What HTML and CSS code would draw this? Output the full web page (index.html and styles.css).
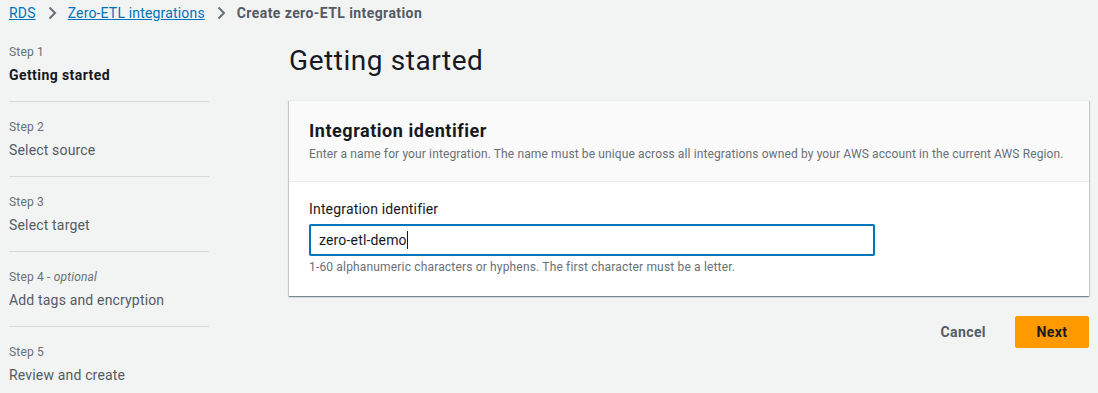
FILE: index.html
```html
<!DOCTYPE html>
<html lang="en">
<head>
  <meta charset="UTF-8">
  <meta name="viewport" content="width=device-width, initial-scale=1">
  <title>Create zero-ETL integration</title>
  <link rel="stylesheet" href="styles.css">
</head>
<body>
  <nav class="breadcrumbs">
    <a href="#">RDS</a>
    <span class="crumb-sep">
      <svg width="16" height="16" viewBox="0 0 16 16"><path d="M5.5 2.5l5.5 5.5-5.5 5.5" fill="none" stroke="currentColor" stroke-width="2"/></svg>
    </span>
    <a href="#">Zero-ETL integrations</a>
    <span class="crumb-sep">
      <svg width="16" height="16" viewBox="0 0 16 16"><path d="M5.5 2.5l5.5 5.5-5.5 5.5" fill="none" stroke="currentColor" stroke-width="2"/></svg>
    </span>
    <span class="crumb-current">Create zero-ETL integration</span>
  </nav>

  <div class="layout">
    <ul class="steps">
      <li class="step active">
        <div class="step-label">Step 1</div>
        <div class="step-title">Getting started</div>
      </li>
      <li class="step">
        <div class="step-label">Step 2</div>
        <div class="step-title">Select source</div>
      </li>
      <li class="step">
        <div class="step-label">Step 3</div>
        <div class="step-title">Select target</div>
      </li>
      <li class="step">
        <div class="step-label">Step 4 - <i>optional</i></div>
        <div class="step-title">Add tags and encryption</div>
      </li>
      <li class="step">
        <div class="step-label">Step 5</div>
        <div class="step-title">Review and create</div>
      </li>
    </ul>

    <main class="content">
      <h1>Getting started</h1>
      <section class="panel">
        <div class="panel-header">
          <h2>Integration identifier</h2>
          <p>Enter a name for your integration. The name must be unique across all integrations owned by your AWS account in the current AWS Region.</p>
        </div>
        <div class="panel-body">
          <label class="field-label">Integration identifier</label>
          <div class="text-input">zero-etl-demo<span class="caret"></span></div>
          <div class="field-hint">1-60 alphanumeric characters or hyphens. The first character must be a letter.</div>
        </div>
      </section>
      <div class="actions">
        <button class="btn-link">Cancel</button>
        <button class="btn-primary">Next</button>
      </div>
    </main>
  </div>
</body>
</html>
```

FILE: styles.css
```css
body {
  margin: 0;
  background-color: #f2f3f3;
  font-family: Roboto, "Open Sans", sans-serif;
  color: #16191f;
  font-size: 14px;
  letter-spacing: 0.012em;
}
b, strong, h1, h2, .crumb-current, .step.active .step-title, button {
  letter-spacing: 0.03em;
}
/* Breadcrumbs */
.breadcrumbs {
  display: flex;
  align-items: center;
  height: 25px;
  padding: 0 9px;
  font-size: 14px;
  line-height: 20px;
}
.breadcrumbs a {
  color: #0073bb;
  text-decoration: underline;
}
.crumb-sep {
  display: flex;
  color: #687078;
  margin: 0 8px;
}
.crumb-current {
  color: #545b64;
  font-weight: bold;
}
/* Layout */
.layout {
  display: grid;
  grid-template-columns: 200px 800px;
  column-gap: 80px;
  padding-left: 9px;
}
/* Steps */
.steps {
  list-style: none;
  margin: 0;
  padding: 2px 0 0;
}
.step {
  padding: 17px 0 16px;
  border-bottom: 1px solid #d5dbdb;
}
.step:last-child {
  border-bottom: none;
}
.step-label {
  font-size: 12px;
  line-height: 16px;
  color: #687078;
  margin-bottom: 5px;
}
.step-title {
  font-size: 14px;
  line-height: 20px;
  color: #545b64;
}
.step.active .step-title {
  color: #16191f;
  font-weight: bold;
}
/* Main content */
h1 {
  margin: 18px 0 21px;
  font-size: 28px;
  line-height: 36px;
  font-weight: normal;
  letter-spacing: 0.02em;
}
.panel {
  background-color: #fff;
  box-shadow: 0 1px 1px 0 rgba(0,28,36,0.3), 1px 1px 1px 0 rgba(0,28,36,0.15), -1px 1px 1px 0 rgba(0,28,36,0.15);
  border-top: 1px solid #eaeded;
}
.panel-header {
  background-color: #fafafa;
  border-bottom: 1px solid #eaeded;
  padding: 19px 20px 19px;
}
.panel-header h2 {
  margin: 0 0 4px;
  font-size: 18px;
  line-height: 22px;
  font-weight: bold;
}
.panel-header p {
  margin: 0;
  font-size: 12px;
  line-height: 16px;
  color: #687078;
  white-space: nowrap;
  letter-spacing: 0.01em;
}
.panel-body {
  padding: 17px 20px 21px;
}
.field-label {
  display: block;
  font-size: 14px;
  line-height: 20px;
  margin-bottom: 5px;
}
.text-input {
  width: 566px;
  height: 32px;
  box-sizing: border-box;
  border: 2px solid #0073bb;
  border-radius: 2px;
  padding: 0 8px;
  display: flex;
  align-items: center;
  font-size: 14px;
}
.caret {
  display: inline-block;
  width: 1px;
  height: 18px;
  background-color: #16191f;
}
.field-hint {
  margin-top: 3px;
  font-size: 12px;
  line-height: 16px;
  color: #687078;
}
/* Actions */
.actions {
  display: flex;
  justify-content: flex-end;
  align-items: center;
  gap: 9px;
  margin-top: 20px;
}
button {
  font-family: inherit;
  font-size: 14px;
  font-weight: bold;
  border-radius: 2px;
  height: 32px;
  cursor: pointer;
}
.btn-link {
  background: none;
  border: none;
  color: #545b64;
  padding: 0 20px;
}
.btn-primary {
  background-color: #ff9900;
  border: 1px solid #ff9900;
  color: #16191f;
  padding: 0 18px;
  width: 74px;
}
```
